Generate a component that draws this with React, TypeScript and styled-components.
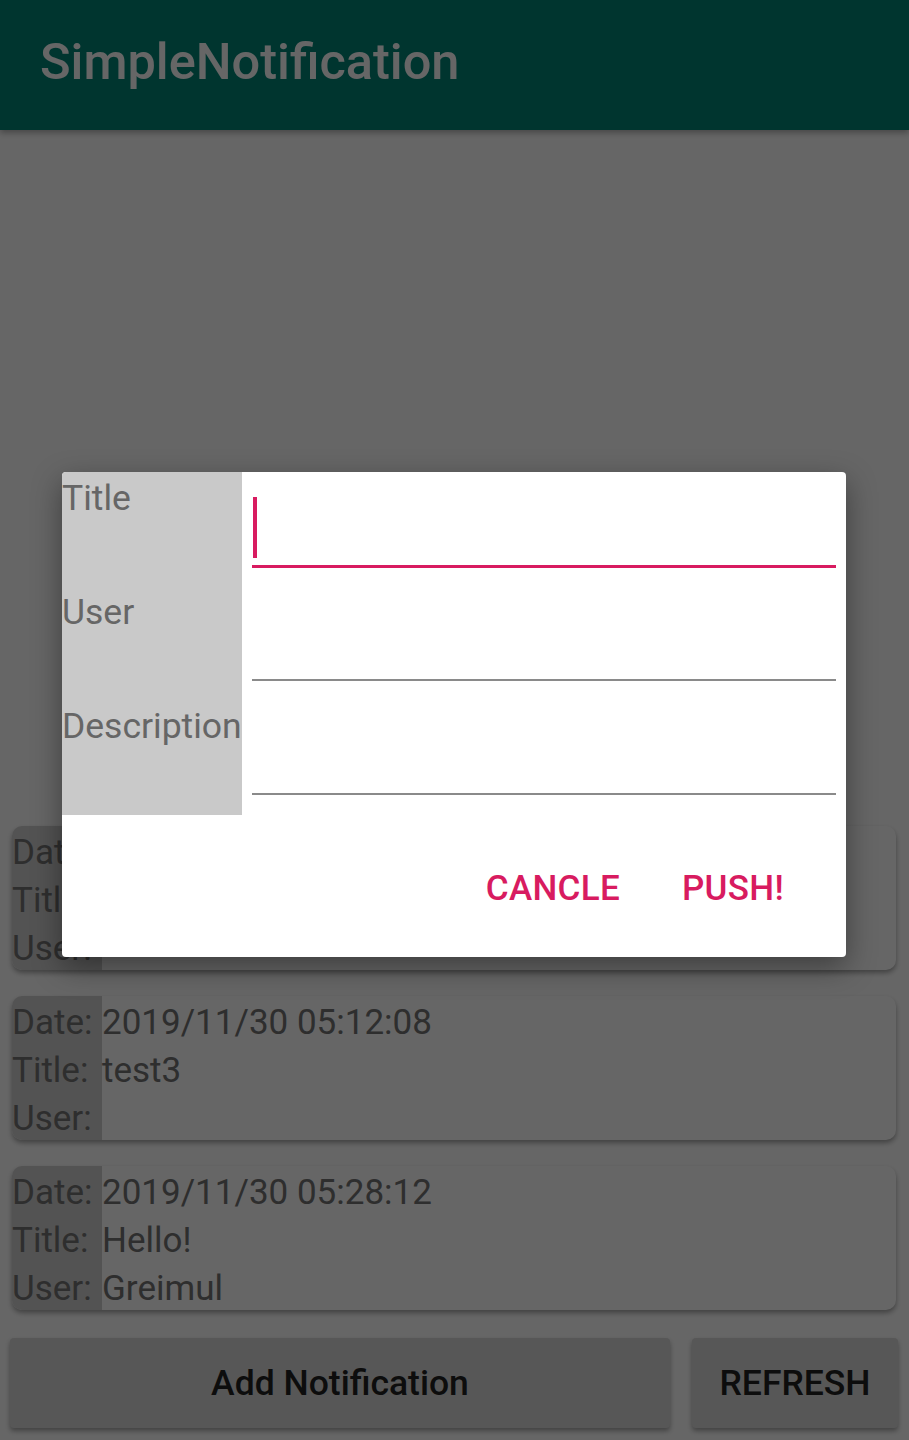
import React from "react";
import styled, { createGlobalStyle } from "styled-components";

const Global = createGlobalStyle`
  html, body, #root {
    margin: 0;
    height: 100%;
  }
  body {
    background: #ffffff;
    font-family: Roboto, "Noto Sans", sans-serif;
  }
`;

const Page = styled.div`
  position: relative;
  display: flex;
  flex-direction: column;
  height: 1440px;
  overflow: hidden;
  background: #ffffff;
`;

const AppBar = styled.header`
  flex: 0 0 130px;
  box-sizing: border-box;
  display: flex;
  align-items: center;
  padding: 0 0 8px 40px;
  background: #008577;
  color: #ffffff;
  font-size: 50.5px;
  font-weight: 500;
  box-shadow: 0 3px 6px rgba(0, 0, 0, 0.3);
  z-index: 1;
`;

const List = styled.div`
  flex: 1;
  display: flex;
  flex-direction: column;
  justify-content: flex-end;
  gap: 26px;
  padding: 0 13px 28px 12px;
`;

const Card = styled.div`
  display: flex;
  height: 144px;
  box-sizing: border-box;
  padding-top: 3px;
  border-radius: 10px;
  overflow: hidden;
  background: #ffffff;
  box-shadow: 0 3px 5px rgba(0, 0, 0, 0.35);
  font-size: 35px;
  line-height: 48px;
  color: #737373;
`;

const CardLabels = styled.div`
  flex: 0 0 90px;
  margin-top: -3px;
  padding-top: 3px;
  background: #cfcfcf;
  white-space: nowrap;
`;

const CardValues = styled.div`
  flex: 1;
  white-space: nowrap;
`;

const Line = styled.div`
  height: 48px;
`;

const ButtonRow = styled.div`
  display: flex;
  gap: 22px;
  padding: 0 11px 12px 10px;
`;

const FlatButton = styled.button<{ $grow?: boolean }>`
  flex: ${(p) => (p.$grow ? "1" : "0 0 206px")};
  height: 90px;
  border: none;
  border-radius: 4px;
  background: #d9d9d9;
  box-shadow: 0 3px 5px rgba(0, 0, 0, 0.35);
  font-family: Roboto, "Noto Sans", sans-serif;
  font-size: 35.5px;
  font-weight: 500;
  color: #222222;
  padding: 0;
`;

const Overlay = styled.div`
  position: absolute;
  inset: 0;
  z-index: 5;
  display: flex;
  justify-content: center;
  align-items: flex-start;
  padding: 472px 1px 0 0;
  background: rgba(0, 0, 0, 0.6);
`;

const Dialog = styled.div`
  width: 784px;
  background: #ffffff;
  border-radius: 4px;
  overflow: hidden;
  box-shadow: 0 10px 30px rgba(0, 0, 0, 0.4);
`;

const Form = styled.div`
  display: grid;
  grid-template-columns: 180px 1fr;
  grid-template-rows: 114px 114px 115px;
`;

const FieldLabel = styled.div`
  background: #c9c9c9;
  color: #666666;
  font-size: 35.5px;
  padding-top: 5px;
  white-space: nowrap;
`;

const Field = styled.div<{ $focused?: boolean }>`
  position: relative;
  margin: 0 10px;
  height: 93px;
  border-bottom: ${(p) => (p.$focused ? "3px solid #d81b60" : "2px solid #8a8a8a")};
`;

const Cursor = styled.span`
  position: absolute;
  left: 1px;
  top: 25px;
  width: 4px;
  height: 61px;
  background: #d81b60;
`;

const Actions = styled.div`
  display: flex;
  justify-content: flex-end;
  align-items: center;
  gap: 62px;
  box-sizing: border-box;
  height: 142px;
  padding: 4px 62px 0 0;
`;

const TextButton = styled.button`
  border: none;
  background: none;
  padding: 0;
  font-family: Roboto, "Noto Sans", sans-serif;
  font-size: 35px;
  font-weight: 500;
  color: #d81b60;
  letter-spacing: 0.3px;
`;

const notifications = [
  { date: "2019/11/30 05:00:00", title: "test2", user: "" },
  { date: "2019/11/30 05:12:08", title: "test3", user: "" },
  { date: "2019/11/30 05:28:12", title: "Hello!", user: "Greimul" },
];

export default function App() {
  return (
    <>
      <Global />
      <Page>
        <AppBar>SimpleNotification</AppBar>
        <List>
          {notifications.map((n, i) => (
            <Card key={i}>
              <CardLabels>
                <Line>Date:</Line>
                <Line>Title:</Line>
                <Line>User:</Line>
              </CardLabels>
              <CardValues>
                <Line>{n.date}</Line>
                <Line>{n.title}</Line>
                <Line>{n.user}</Line>
              </CardValues>
            </Card>
          ))}
        </List>
        <ButtonRow>
          <FlatButton $grow>Add Notification</FlatButton>
          <FlatButton>REFRESH</FlatButton>
        </ButtonRow>
        <Overlay>
          <Dialog>
            <Form>
              <FieldLabel>Title</FieldLabel>
              <Field $focused>
                <Cursor />
              </Field>
              <FieldLabel>User</FieldLabel>
              <Field />
              <FieldLabel>Description</FieldLabel>
              <Field />
            </Form>
            <Actions>
              <TextButton>CANCLE</TextButton>
              <TextButton>PUSH!</TextButton>
            </Actions>
          </Dialog>
        </Overlay>
      </Page>
    </>
  );
}
